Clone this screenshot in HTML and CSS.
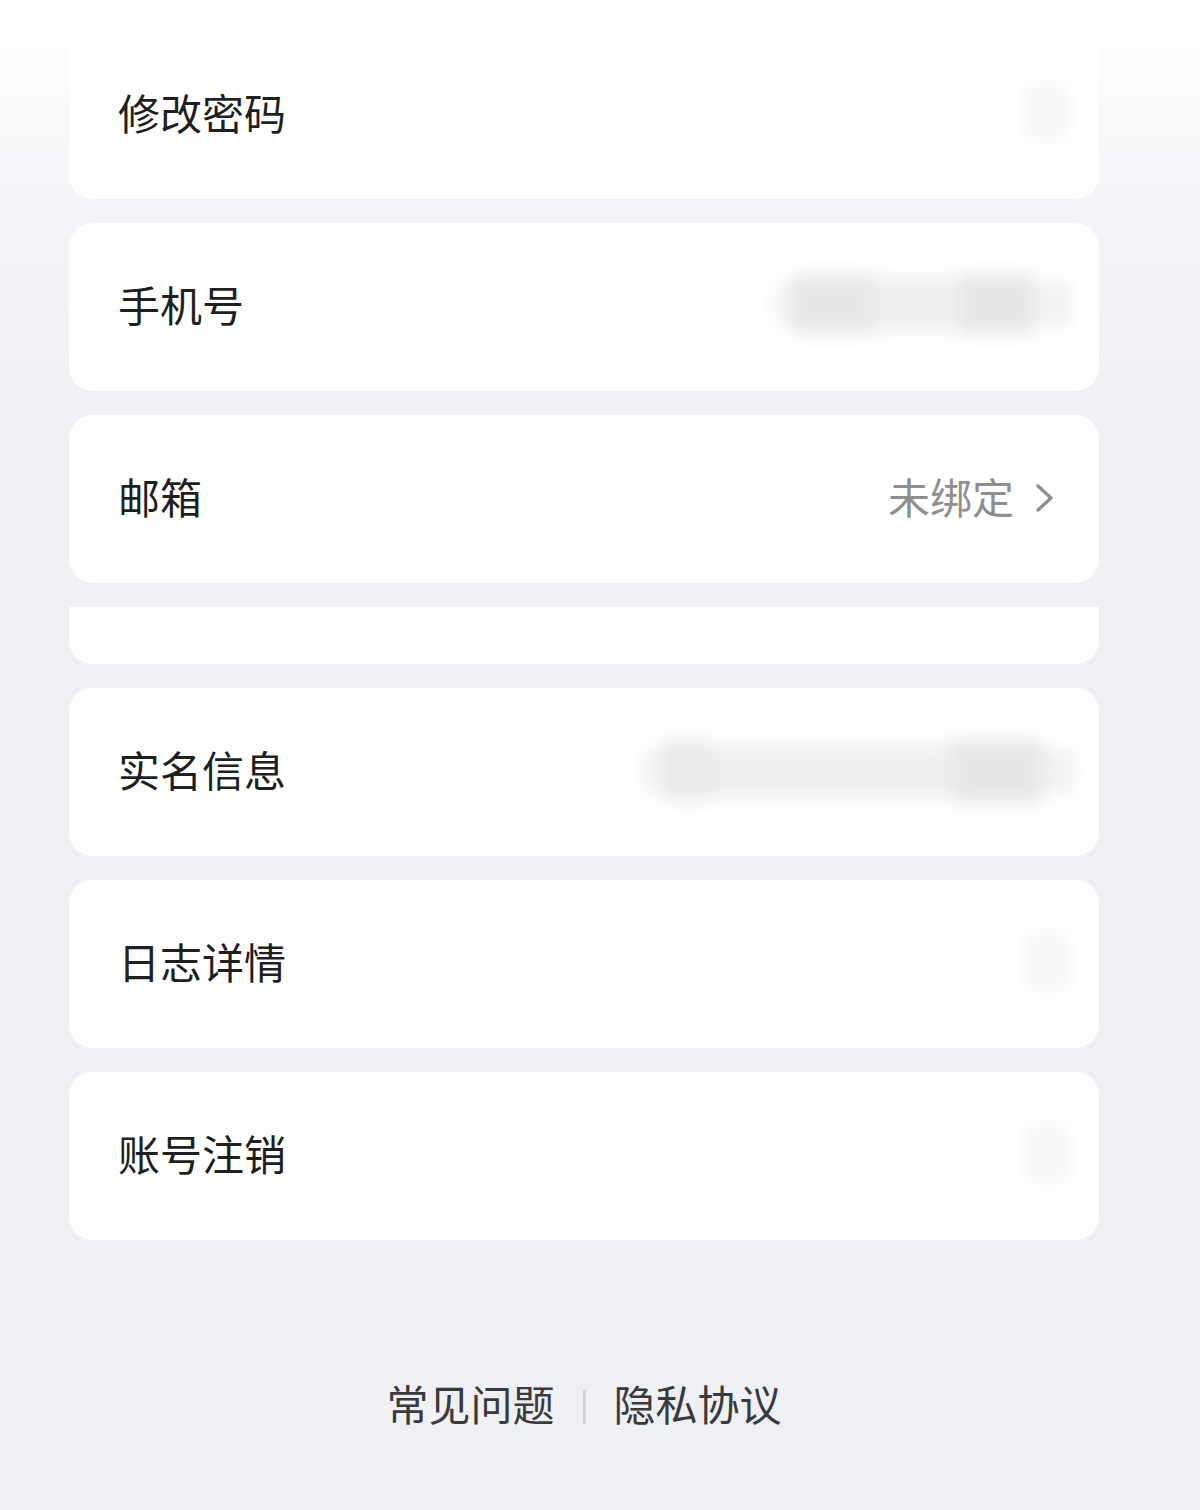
FILE: index.html
```html
<!DOCTYPE html>
<html lang="zh-CN">

<head>
  <meta name="viewport" content="width=device-width">
  <title>账号与安全</title>
  <link rel="stylesheet" href="styles.css">
</head>

<body>
  <div class="page">
    <ul class="settings">
      <li class="row first">
        <span class="label">修改密码</span>
        <span class="masked masked-icon"></span>
      </li>
      <li class="row">
        <span class="label">手机号</span>
        <span class="masked masked-phone">
          <i class="blot w0"></i><i class="blot w1"></i><i class="blot w2"></i><i class="blot w3"></i><i class="blot w5"></i>
        </span>
      </li>
      <li class="row">
        <span class="label">邮箱</span>
        <span class="value">未绑定</span>
        <svg class="chevron" width="22" height="30" viewBox="0 0 22 30">
          <polyline points="4,3 17,15 4,27" fill="none" stroke="#8f8f8f" stroke-width="3.4" stroke-linecap="round" stroke-linejoin="round" />
        </svg>
      </li>
      <li class="row stub"></li>
      <li class="row">
        <span class="label">实名信息</span>
        <span class="masked masked-id">
          <i class="blot w0"></i><i class="blot w1"></i><i class="blot w4"></i><i class="blot w2"></i><i class="blot w5"></i>
        </span>
      </li>
      <li class="row">
        <span class="label">日志详情</span>
        <span class="masked masked-icon"></span>
      </li>
      <li class="row">
        <span class="label">账号注销</span>
        <span class="masked masked-icon"></span>
      </li>
    </ul>

    <footer class="links">
      <a href="#">常见问题</a>
      <span class="divider"></span>
      <a href="#">隐私协议</a>
    </footer>
  </div>
</body>

</html>
```

FILE: styles.css
```css
html,
body {
  margin: 0;
  min-height: 100%;
}

body {
  font-family: "Noto Sans CJK SC", "Noto Sans", sans-serif;
  background: linear-gradient(to bottom, #ffffff 0, #f4f5f8 200px, #eff0f4 420px, #eff0f4 100%);
  min-height: 1510px;
}

.page {
  width: 1030px;
  margin: 0 0 0 69px;
  padding-top: 31px;
}

.settings {
  list-style: none;
  margin: 0;
  padding: 0;
  display: flex;
  flex-direction: column;
  gap: 24px;
}

.row {
  display: flex;
  align-items: center;
  height: 168px;
  box-sizing: border-box;
  padding: 0 43px 6px 49px;
  background: #fff;
  border-radius: 24px;
}

.row.stub {
  height: 57px;
  padding: 0;
  border-radius: 0 0 24px 24px;
}

.label {
  flex: 1;
  font-size: 42px;
  line-height: 1;
  color: #1f1f1f;
}

.value {
  font-size: 42px;
  line-height: 1;
  color: #8e8e8e;
  margin-right: 20px;
}

.chevron {
  display: block;
  margin-top: 4px;
}

/* privacy-blurred values */
.masked {
  display: flex;
  align-items: center;
  filter: blur(9px);
}

.masked-icon {
  width: 46px;
  height: 60px;
  margin-right: -14px;
  background: #f6f6f6;
  border-radius: 8px;
}

.masked-phone {
  margin-right: -16px;
}

.masked-id {
  margin-right: -20px;
  margin-top: 4px;
}

.blot {
  display: block;
  height: 52px;
  background: #ececec;
}

.masked-phone .w0 { width: 20px; height: 40px; background: #f4f4f4; }
.masked-phone .w1 { width: 80px; height: 60px; background: #e6e6e6; }
.masked-phone .w2 { width: 90px; background: #eeeeee; }
.masked-phone .w3 { width: 70px; height: 60px; background: #e5e5e5; }
.masked-phone .w5 { width: 40px; height: 44px; background: #f2f2f2; }

.masked-id .w0 { width: 20px; height: 44px; background: #f3f3f3; }
.masked-id .w1 { width: 50px; height: 60px; background: #e9e9e9; }
.masked-id .w4 { width: 240px; background: #eeeeee; }
.masked-id .w2 { width: 90px; height: 62px; background: #e6e6e6; }
.masked-id .w5 { width: 34px; height: 44px; background: #f2f2f2; }

.links {
  display: flex;
  justify-content: center;
  align-items: center;
  gap: 28px;
  margin-top: 142px;
}

.links a {
  font-size: 42px;
  line-height: 1;
  color: #3a3a3c;
  text-decoration: none;
}

.divider {
  width: 3px;
  height: 34px;
  margin-top: 8px;
  background: #d2d2d4;
}
```
